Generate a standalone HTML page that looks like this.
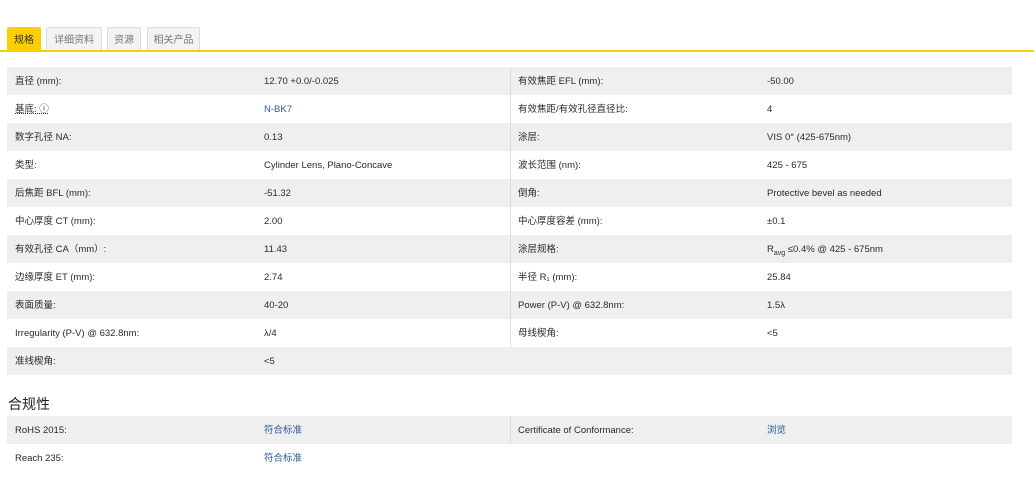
<!DOCTYPE html>
<html><head><meta charset="utf-8"><style>
*{margin:0;padding:0;box-sizing:border-box}
body{width:1034px;height:498px;background:#fff;font-family:"Liberation Sans","Noto Sans CJK SC",sans-serif;font-size:9.5px;color:#2a2a2a;position:relative;overflow:hidden}
.tabs{position:absolute;top:27px;left:7px;height:24px}
.tab{position:absolute;top:0;height:24px;border:1px solid #ddd;border-bottom:none;background:#f3f3f3;color:#777;font-size:10px;line-height:25px;text-align:center;border-radius:2px 2px 0 0}
.tab.a{background:#fcd000;border-color:#fcd000;color:#333}
.line{position:absolute;top:50px;left:0;width:1034px;height:2px;background:#fcd000}
.tbl{position:absolute;left:7px;width:1005px}
.row{height:28px;position:relative}
.row.g{background:#efefef}
.row span{position:absolute;top:1px;line-height:28px;white-space:nowrap}
.c1{left:8px}.c2{left:257px}.c3{left:511px}.c4{left:760px}
.row:after{content:"";position:absolute;left:503px;top:0;width:1px;height:28px;background:#ddd}
.row.n:after{display:none}
.lnk{color:#2a5aa0}
h3{position:absolute;left:8px;top:394px;font-size:14px;font-weight:normal;color:#222}
sub{font-size:7px}
</style></head><body>
<div class="tabs">
<div class="tab a" style="left:0;width:34px">规格</div>
<div class="tab" style="left:39px;width:56px">详细资料</div>
<div class="tab" style="left:100px;width:34px">资源</div>
<div class="tab" style="left:140px;width:53px">相关产品</div>
</div>
<div class="line"></div>
<div class="tbl" style="top:67px">
<div class="row g"><span class="c1">直径 (mm):</span><span class="c2">12.70 +0.0/-0.025</span><span class="c3">有效焦距 EFL (mm):</span><span class="c4">-50.00</span></div>
<div class="row"><span class="c1" style="text-decoration:underline dotted">基底: ⓘ</span><span class="c2 lnk">N-BK7</span><span class="c3">有效焦距/有效孔径直径比:</span><span class="c4">4</span></div>
<div class="row g"><span class="c1">数字孔径 NA:</span><span class="c2">0.13</span><span class="c3">涂层:</span><span class="c4">VIS 0° (425-675nm)</span></div>
<div class="row"><span class="c1">类型:</span><span class="c2">Cylinder Lens, Plano-Concave</span><span class="c3">波长范围 (nm):</span><span class="c4">425 - 675</span></div>
<div class="row g"><span class="c1">后焦距 BFL (mm):</span><span class="c2">-51.32</span><span class="c3">倒角:</span><span class="c4">Protective bevel as needed</span></div>
<div class="row"><span class="c1">中心厚度 CT (mm):</span><span class="c2">2.00</span><span class="c3">中心厚度容差 (mm):</span><span class="c4">±0.1</span></div>
<div class="row g"><span class="c1">有效孔径 CA（mm）:</span><span class="c2">11.43</span><span class="c3">涂层规格:</span><span class="c4">R<sub>avg</sub> ≤0.4% @ 425 - 675nm</span></div>
<div class="row"><span class="c1">边缘厚度 ET (mm):</span><span class="c2">2.74</span><span class="c3">半径 R₁ (mm):</span><span class="c4">25.84</span></div>
<div class="row g"><span class="c1">表面质量:</span><span class="c2">40-20</span><span class="c3">Power (P-V) @ 632.8nm:</span><span class="c4">1.5λ</span></div>
<div class="row"><span class="c1">Irregularity (P-V) @ 632.8nm:</span><span class="c2">λ/4</span><span class="c3">母线楔角:</span><span class="c4">&lt;5</span></div>
<div class="row g n"><span class="c1">准线楔角:</span><span class="c2">&lt;5</span></div>
</div>
<h3>合规性</h3>
<div class="tbl" style="top:416px">
<div class="row g"><span class="c1">RoHS 2015:</span><span class="c2 lnk">符合标准</span><span class="c3">Certificate of Conformance:</span><span class="c4 lnk">浏览</span></div>
<div class="row n"><span class="c1">Reach 235:</span><span class="c2 lnk">符合标准</span></div>
</div>
</body></html>
